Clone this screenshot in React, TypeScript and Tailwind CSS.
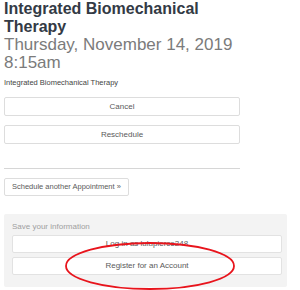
export default function App() {
  return (
    <div
      className="relative w-[300px] h-[290px] overflow-hidden bg-white px-1"
      style={{ fontFamily: '"Liberation Sans", Arial, sans-serif' }}
    >
      <h1 className="text-[16px] leading-[18px] font-bold text-[#333a45]">
        Integrated Biomechanical
        <br />
        Therapy
      </h1>
      <h2 className="text-[17px] leading-[18px] text-[#7b7b7b]">
        Thursday, November 14, 2019
        <br />
        8:15am
      </h2>
      <p className="mt-[6px] text-[7.5px] leading-[10px] text-[#444]">
        Integrated Biomechanical Therapy
      </p>

      <div className="mt-[9px] flex w-[236px] flex-col gap-[9px]">
        <button className="h-[19px] rounded-[2px] border border-[#dddddd] bg-white text-[8px] text-[#5a5a5a]">
          Cancel
        </button>
        <button className="h-[19px] rounded-[2px] border border-[#dddddd] bg-white text-[8px] text-[#5a5a5a]">
          Reschedule
        </button>
      </div>

      <hr className="mt-[24px] w-[236px] border-t border-[#d6d6d6]" />

      <button className="mt-[9px] h-[18px] rounded-[2px] border border-[#dddddd] bg-white px-[7px] text-[7.5px] text-[#5a5a5a]">
        Schedule another Appointment »
      </button>

      <div className="mt-[18px] w-[283px] rounded-[2px] bg-[#f3f3f3] pb-[12px] pl-2 pr-[5px] pt-[8px]">
        <p className="text-[8px] leading-[10px] text-[#a0a0a0]">Save your information</p>
        <div className="mt-[3px] flex flex-col gap-[4px]">
          <button className="h-[18px] rounded-[2px] border border-[#e2e2e2] bg-white text-[8px] text-[#5a5a5a]">
            Log in as lulupierce248
          </button>
          <button className="h-[18px] rounded-[2px] border border-[#e2e2e2] bg-white text-[8px] text-[#5a5a5a]">
            Register for an Account
          </button>
        </div>
      </div>

      <svg
        className="pointer-events-none absolute left-0 top-0"
        width="300"
        height="290"
        viewBox="0 0 300 290"
      >
        <ellipse cx="150" cy="266" rx="84" ry="23" fill="none" stroke="#e8141c" strokeWidth="1.8" />
      </svg>
    </div>
  );
}
